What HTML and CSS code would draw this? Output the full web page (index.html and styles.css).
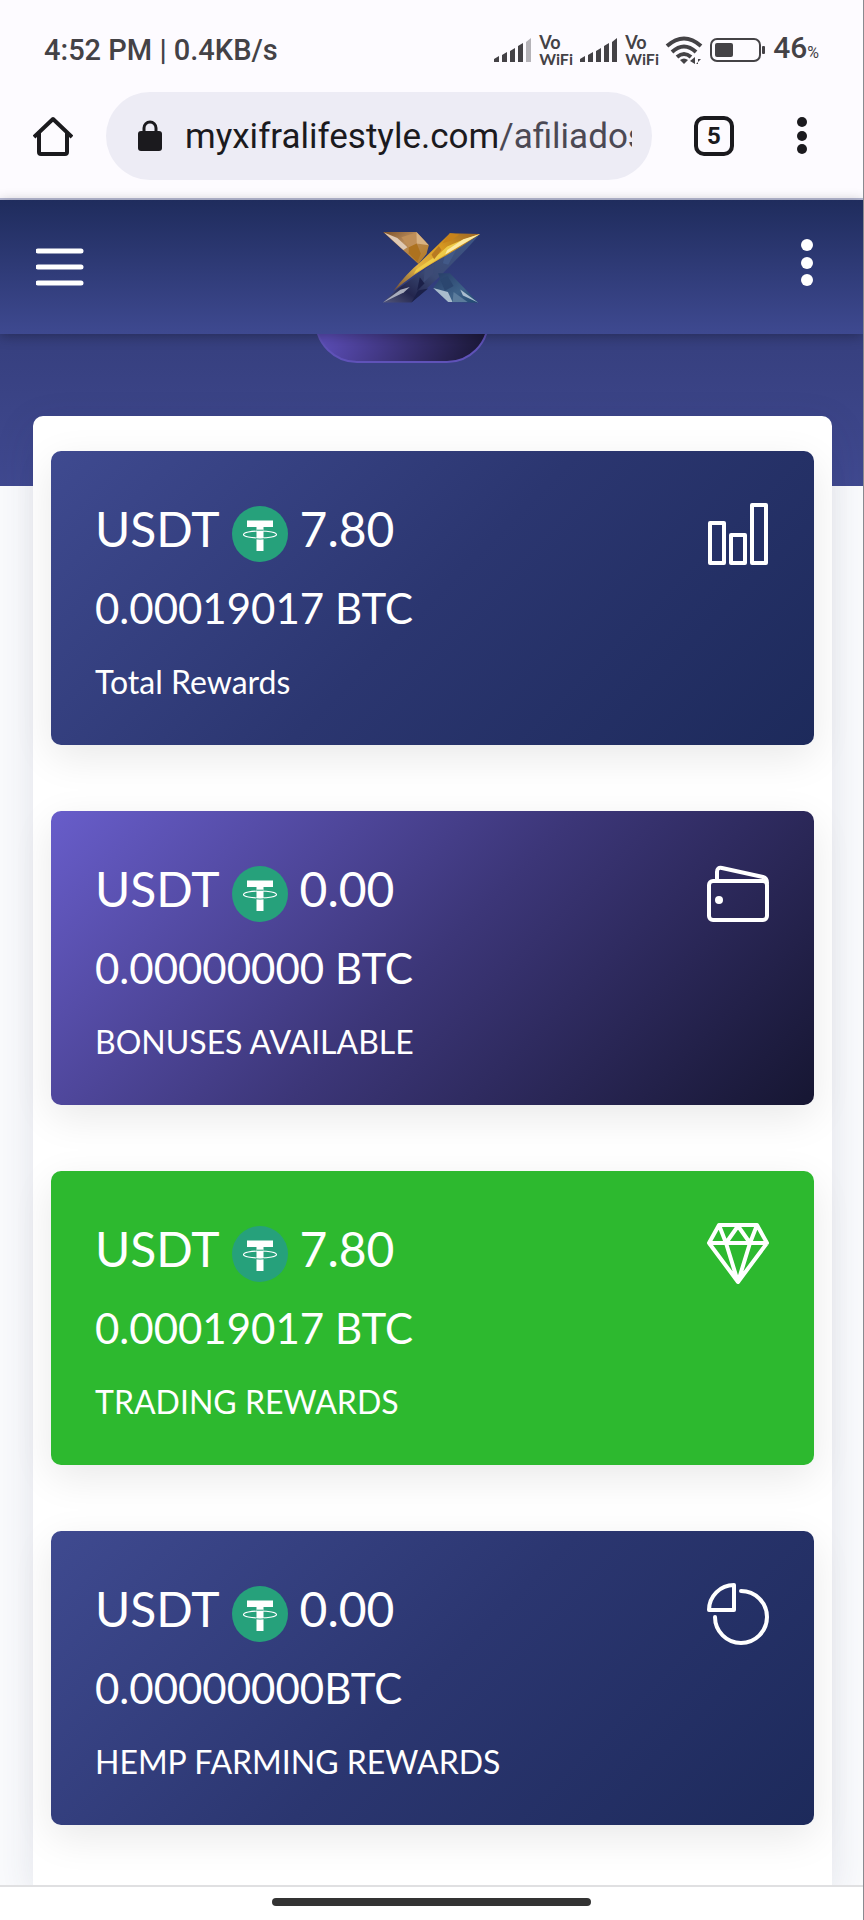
FILE: index.html
```html
<!DOCTYPE html>
<html lang="en">
<head>
<meta charset="utf-8">
<meta name="viewport" content="width=device-width, initial-scale=1">
<title>Rewards</title>
<link rel="stylesheet" href="styles.css">
</head>
<body>
<svg class="defs" aria-hidden="true">
  <symbol id="coin" viewBox="0 0 56 56">
    <circle cx="28" cy="28" r="28" fill="#26a17b"/>
    <path d="M15 14.500h26v6.500H31.500v24h-7V21H15z" fill="#fff"/>
    <ellipse cx="28" cy="28.500" rx="16.500" ry="3.500" fill="none" stroke="#fff" stroke-width="1.200"/>
    <path d="M24.500 24.200h7" stroke="#26a17b" stroke-width="1"/>
    <path d="M24 32.800q4 .6 8 0" stroke="#26a17b" stroke-width="1" fill="none"/>
  </symbol>
  <symbol id="signal" viewBox="0 0 40 26">
    <path d="M1 22l5-3v6H1zM9 18l5-3v10H9zM17 14l5-3v14h-5zM25 9l5-3v19h-5z"/>
  </symbol>
</svg>

<div class="status-bar">
  <span class="clock">4:52 PM | 0.4KB/s</span>
  <div class="status-icons">
    <svg class="signal" viewBox="0 0 40 26"><use href="#signal"/><path d="M33 5l5-4v24h-5z" fill="#b5b3b8"/></svg>
    <span class="vowifi"><span class="vo">Vo</span><br>WiFi</span>
    <svg class="signal" viewBox="0 0 40 26"><use href="#signal"/><path d="M33 5l5-4v24h-5z"/></svg>
    <span class="vowifi"><span class="vo">Vo</span><br>WiFi</span>
    <svg class="wifi" viewBox="0 0 38 30">
      <g fill="none" stroke="#444246" stroke-width="4"><path d="M2 11Q19-4 36 11"/><path d="M7 17Q19 6 31 17"/><path d="M12 22Q19 16 26 22"/></g>
      <path d="M15 25q4-3 8 0l-4 4zM25 26l5-4v7zM31 22v7l5-5h-3v5h-2z"/>
    </svg>
    <svg class="battery" viewBox="0 0 58 26">
      <rect x="2" y="2" width="49" height="22" rx="6" fill="none" stroke="#444246" stroke-width="2"/>
      <rect x="6" y="6" width="18" height="14" rx="2"/><rect x="53" y="9" width="3" height="8" rx="1"/>
    </svg>
    <span class="charge">46<small>%</small></span>
  </div>
</div>

<div class="toolbar">
  <button class="tool" aria-label="Home">
    <svg width="40" height="40" viewBox="0 0 40 40" fill="none" stroke="#1b1a1e" stroke-width="4" stroke-linejoin="round"><path d="M1 21L20 3l19 18M6 17v19q0 2 2 2h24q2 0 2-2V17"/></svg>
  </button>
  <a class="address" href="#">
    <svg width="24" height="32" viewBox="0 0 24 32"><rect y="11" width="24" height="20" rx="3" fill="#1b1a1e"/><path d="M6 12V8a6 6 0 0 1 12 0v4" fill="none" stroke="#1b1a1e" stroke-width="3"/></svg>
    <span class="url">myxifralifestyle.com<span class="path">/afiliados</span></span>
  </a>
  <button class="tabs" aria-label="Open tabs">5</button>
  <button class="tool more" aria-label="Browser menu">
    <svg width="12" height="40" viewBox="0 0 12 40" fill="#1b1a1e"><circle cx="6" cy="6" r="5"/><circle cx="6" cy="20" r="5"/><circle cx="6" cy="33" r="5"/></svg>
  </button>
</div>

<header class="site-header">
  <button class="tool" aria-label="Menu">
    <svg width="48" height="40" viewBox="0 0 48 40" stroke="#fff" stroke-width="5" stroke-linecap="round"><path d="M2 4h43M2 20h43M2 36h43"/></svg>
  </button>
  <a href="#" class="logo" aria-label="Xifra home">
    <svg width="97" height="72" viewBox="75 52 290 214">
      <defs>
        <linearGradient id="g1" x1="0" y1="0" x2="1" y2="1"><stop offset="0" stop-color="#7b5028"/><stop offset=".4" stop-color="#b98c5c"/><stop offset="1" stop-color="#b57a1c"/></linearGradient>
        <linearGradient id="g2" x1="1" y1="0" x2="0" y2="1"><stop offset="0" stop-color="#9a6424"/><stop offset=".35" stop-color="#d99a20"/><stop offset=".65" stop-color="#e2b443"/><stop offset="1" stop-color="#6b4838"/></linearGradient>
        <linearGradient id="g3" x1="1" y1="0" x2="0" y2="1"><stop offset="0" stop-color="#3d5686"/><stop offset=".55" stop-color="#3b4a74"/><stop offset=".8" stop-color="#23264e"/><stop offset="1" stop-color="#53577c"/></linearGradient>
        <linearGradient id="g4" x1="0" y1="0" x2="1" y2="1"><stop offset="0" stop-color="#263c67"/><stop offset=".6" stop-color="#3d6187"/><stop offset="1" stop-color="#1f4770"/></linearGradient>
      </defs>
      <path d="M75 54h100l37 40-7 26-24 30z" fill="url(#g1)"/>
      <path d="M78 56l40 16 30 28-12 8z" fill="#dfc9b4"/><path d="M130 70l45-14 8 34-31 10z" fill="#c08f58"/><path d="M175 54l37 40-36-5z" fill="#d8b282"/><path d="M152 100l24-11 12 30-10 25-26-26z" fill="#ad721f"/>
      <path d="M365 60L325 105 240 192l-80 73H75l45-42 140-98z" fill="url(#g3)"/>
      <path d="M75 265l52-38 28-8-18 16z" fill="#a9adbd"/><path d="M200 165l32-20-8 36-28 24z" fill="#3d4b76"/><path d="M260 125l40-28-30 55-16-4z" fill="#425988"/><path d="M160 265l20-36 30-6zM185 190l14 18-22 22z" fill="#1b2048"/>
      <path d="M275 58l90 2q-60 42-120 75Q165 180 105 232q40-54 82-88z" fill="url(#g2)"/>
      <path d="M365 60l-62 22-36 16-22 20-70 48-8 14 68-42z" fill="#eecb48"/><path d="M365 60l-50 16-48 32-6 14z" fill="#fbe9a4"/><path d="M275 58l-22 30 26-8 24-18z" fill="#c7821b"/><path d="M220 122l22-26 8 12-22 28z" fill="#b87a22"/>
      <path d="M240 178h35l85 88-90-2-45-42 20-27z" fill="url(#g4)"/>
      <path d="M225 222l44 12 14 30h-13z" fill="#a9bccd"/><path d="M360 266l-46-22-8-18z" fill="#a9bed0"/><path d="M268 186l18 30-26 14-14-34z" fill="#2b466f"/><path d="M283 264l3-30 42 30z" fill="#5b7c9c"/>
    </svg>
  </a>
  <button class="tool options" aria-label="More options">
    <svg width="14" height="50" viewBox="0 0 14 50" fill="#fff"><circle cx="7" cy="7" r="6"/><circle cx="7" cy="25" r="6"/><circle cx="7" cy="42" r="6"/></svg>
  </button>
</header>

<div class="hero"><div class="hero-clip"><div class="hero-pill"></div></div></div>

<main class="panel">
  <section class="card navy">
    <div>
      <h2 class="amount">USDT <svg class="coin"><use href="#coin"/></svg> 7.80</h2>
      <p class="btc">0.00019017 BTC</p>
      <p class="label">Total Rewards</p>
    </div>
    <svg class="card-icon" viewBox="0 0 62 62"><rect x="3" y="20" width="14" height="40"/><rect x="24" y="32" width="14" height="28"/><rect x="45" y="2" width="14" height="58"/></svg>
  </section>
  <section class="card violet">
    <div>
      <h2 class="amount">USDT <svg class="coin"><use href="#coin"/></svg> 0.00</h2>
      <p class="btc">0.00000000 BTC</p>
      <p class="label">BONUSES AVAILABLE</p>
    </div>
    <svg class="card-icon" viewBox="0 0 62 62"><rect x="2" y="18" width="58" height="39" rx="4"/><path d="M10 17V9q0-5 5-4l41 9q4 1 4 6"/><circle cx="12" cy="37" r="4" fill="#fff" stroke="none"/></svg>
  </section>
  <section class="card green">
    <div>
      <h2 class="amount">USDT <svg class="coin"><use href="#coin"/></svg> 7.80</h2>
      <p class="btc">0.00019017 BTC</p>
      <p class="label">TRADING REWARDS</p>
    </div>
    <svg class="card-icon" viewBox="0 0 62 62"><path d="M12 2h38l10 18-29 39L2 20zM2 20h58M12 2l7 18L31 3l12 17 7-18M19 20l12 39 12-39"/></svg>
  </section>
  <section class="card navy">
    <div>
      <h2 class="amount">USDT <svg class="coin"><use href="#coin"/></svg> 0.00</h2>
      <p class="btc">0.00000000BTC</p>
      <p class="label">HEMP FARMING REWARDS</p>
    </div>
    <svg class="card-icon" viewBox="0 0 62 62"><path d="M27 27V2A25 25 0 0 0 2 27zM34 8A26 26 0 1 1 8 34"/></svg>
  </section>
</main>

<div class="gesture-bar"><div class="handle"></div></div>
</body>
</html>
```

FILE: styles.css
```css
* { box-sizing: border-box; }

body {
  margin: 0;
  background: #fafbfd;
  border-right: 1px solid #8a8a90;
  font-family: Lato, "Noto Sans", sans-serif;
  color: #fff;
}

h2, p { margin: 0; font-weight: 400; }
button { margin: 0; padding: 0; border: 0; background: none; font: inherit; color: inherit; }
svg { display: block; flex: none; }
.defs { display: none; }

.status-bar {
  display: flex;
  align-items: center;
  justify-content: space-between;
  height: 92px;
  padding: 8px 44px 0;
  background: #fdfbff;
  color: #444246;
  font-family: Roboto, sans-serif;
  font-size: 29px;
  font-weight: 500;
}
.status-icons { display: flex; align-items: center; gap: 6px; fill: #444246; }
.signal { width: 40px; height: 26px; }
.vowifi { width: 34px; font: 700 16px/16px Lato, sans-serif; }
.vo { font-size: 18px; }
.wifi { width: 38px; height: 30px; }
.battery { width: 58px; height: 26px; }
.charge { font-size: 30px; line-height: 32px; }
.charge small { font-size: 16px; font-weight: 400; }

.toolbar {
  display: flex;
  align-items: center;
  height: 108px;
  padding: 0 55px 18px 33px;
  background: #fdfbff;
  border-bottom: 2px solid #b9bcd6;
  font-family: Roboto, sans-serif;
}
.address {
  display: flex;
  flex: 1;
  align-items: center;
  gap: 23px;
  min-width: 0;
  height: 88px;
  margin: 0 42px 0 33px;
  padding: 0 20px 0 32px;
  border-radius: 44px;
  background: #edecf5;
  color: #1b1a1e;
  font-size: 35px;
  line-height: 48px;
  text-decoration: none;
}
.url { flex: 1; padding-top: 2px; overflow: hidden; white-space: nowrap; }
.path { color: #4b4954; }
.tabs {
  width: 40px;
  height: 40px;
  margin-right: 62px;
  border: 4px solid #1b1a1e;
  border-radius: 10px;
  color: #1b1a1e;
  font-family: Roboto, sans-serif;
  font-size: 24px;
  font-weight: 700;
  line-height: 32px;
}

.site-header {
  position: relative;
  z-index: 1;
  display: grid;
  grid-template-columns: 1fr auto 1fr;
  align-items: center;
  height: 134px;
  padding: 0 36px;
  background: linear-gradient(#1f2c5d, #3e4990);
  box-shadow: 0 2px 12px rgba(0, 0, 0, .3);
}
.site-header .tool { justify-self: start; }
.site-header .options { justify-self: end; padding: 0 13px 8px 0; }

.hero {
  height: 152px;
  background: linear-gradient(#363f7e, #404990);
}
.hero-clip {
  display: flex;
  align-items: flex-end;
  justify-content: center;
  height: 29px;
  padding-right: 60px;
  overflow: hidden;
}
.hero-pill {
  flex: none;
  width: 174px;
  height: 84px;
  border: 2px solid #5f52b8;
  border-radius: 42px;
  background: linear-gradient(120deg, #5a4cb4 20%, #1b1838 95%);
}

.panel {
  position: relative;
  display: grid;
  gap: 66px;
  margin: -70px 31px 0 33px;
  padding: 35px 18px 60px;
  border-radius: 10px 10px 0 0;
  background: #fff;
  box-shadow: 0 12px 40px rgba(40, 50, 90, .12);
}
.card {
  display: flex;
  justify-content: space-between;
  padding: 42px 45px 43px 44px;
  border-radius: 10px;
  box-shadow: 0 12px 40px rgba(0, 0, 0, .09);
}
.navy { background: linear-gradient(135deg, #3f4a90, #2b3670 50%, #1d2a5b); }
.violet { background: linear-gradient(135deg, #685dca, #3c3678 50%, #161632); }
.green { background: #2db92f; }

.amount {
  display: flex;
  gap: 12px;
  font-size: 48px;
  line-height: 72px;
}
.coin { width: 56px; height: 56px; margin-top: 13px; }
.btc { margin-top: 11px; font-size: 42px; line-height: 64px; }
.label { margin-top: 22px; font-size: 32px; line-height: 40px; }
.card-icon {
  width: 62px;
  height: 62px;
  margin-top: 10px;
  fill: none;
  stroke: #fff;
  stroke-width: 4;
  stroke-linecap: round;
  stroke-linejoin: round;
}

.gesture-bar {
  position: relative;
  display: flex;
  justify-content: center;
  height: 35px;
  padding-top: 11px;
  background: #fff;
  border-top: 2px solid #e0e0e2;
}
.handle { width: 37%; height: 8px; border-radius: 4px; background: #333; }
```
